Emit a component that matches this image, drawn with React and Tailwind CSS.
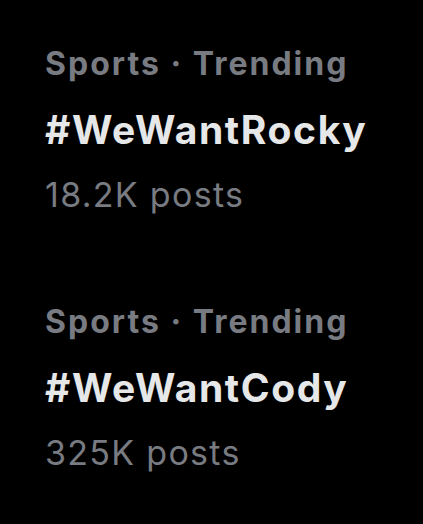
export default function App() {
  const items = [
    { tag: "#WeWantRocky", posts: "18.2K posts" },
    { tag: "#WeWantCody", posts: "325K posts" },
  ];
  return (
    <div
      className="w-[423px] h-[524px] bg-black overflow-hidden pl-[45px] pt-[44px] flex flex-col gap-[85px]"
      style={{ fontFamily: "Inter, 'Noto Sans', sans-serif" }}
    >
      {items.map((it) => (
        <div key={it.tag} className="flex flex-col">
          <div className="text-[32px] leading-[40px] font-bold tracking-[2px] text-[#787b81]">
            Sports · Trending
          </div>
          <div className="mt-[22px] text-[39px] leading-[48px] font-bold tracking-[1.6px] text-[#e6e7e8]">
            {it.tag}
          </div>
          <div className="mt-[19px] text-[34px] leading-[44px] tracking-[1.3px] text-[#787b81]">
            {it.posts}
          </div>
        </div>
      ))}
    </div>
  );
}
